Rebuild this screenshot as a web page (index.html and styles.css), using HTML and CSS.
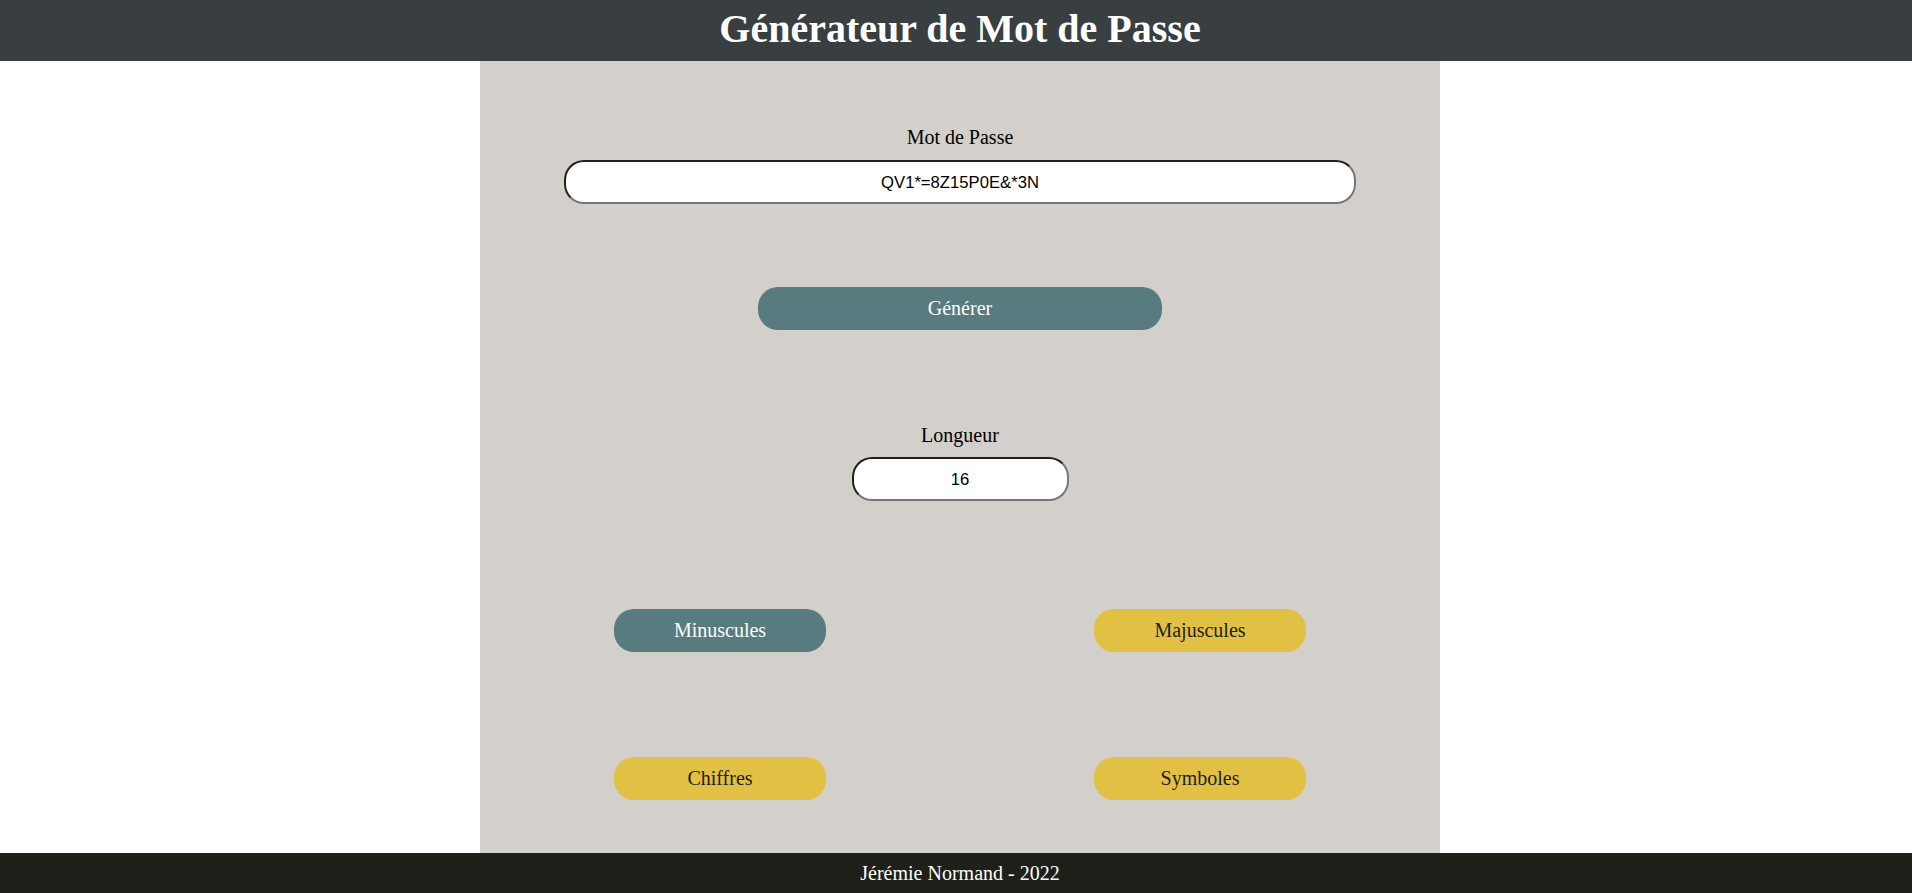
FILE: index.html
```html
<!DOCTYPE html>
<html lang="fr">
<head>
<meta charset="utf-8">
<title>Générateur de Mot de Passe</title>
<link rel="stylesheet" href="styles.css">
</head>
<body>
<header class="site-header">
  <h1 class="title">Générateur de Mot de Passe</h1>
</header>
<main class="panel">
  <section class="field field-password">
    <label class="field-label" for="password">Mot de Passe</label>
    <input class="field-input input-password" id="password" type="text" value="QV1*=8Z15P0E&amp;*3N" readonly>
  </section>
  <button class="btn btn-active btn-generate" type="button">Générer</button>
  <section class="field field-length">
    <label class="field-label" for="length">Longueur</label>
    <input class="field-input input-length" id="length" type="text" value="16">
  </section>
  <div class="options">
    <div class="option-cell"><button class="btn btn-active btn-option" type="button">Minuscules</button></div>
    <div class="option-cell"><button class="btn btn-inactive btn-option" type="button">Majuscules</button></div>
    <div class="option-cell"><button class="btn btn-inactive btn-option" type="button">Chiffres</button></div>
    <div class="option-cell"><button class="btn btn-inactive btn-option" type="button">Symboles</button></div>
  </div>
</main>
<footer class="site-footer">Jérémie Normand - 2022</footer>
</body>
</html>
```
FILE: styles.css
```css
html {
  overflow: hidden;
}

body {
  margin: 0;
  width: 1920px;
  font-family: "Liberation Serif", "Times New Roman", serif;
  font-size: 20px;
  color: #000;
  background: #ffffff;
}

.site-header {
  background: #393e41;
  padding: 6px 0 9px;
  text-align: center;
}

.title {
  margin: 0;
  font-size: 40px;
  line-height: 46px;
  font-weight: bold;
  color: #ffffff;
}

.panel {
  width: 960px;
  margin: 0 auto;
  background: #d3d0cb;
  padding: 65px 0 53px;
  display: flex;
  flex-direction: column;
  align-items: center;
}

.field {
  display: flex;
  flex-direction: column;
  align-items: center;
}

.field-label {
  display: block;
  line-height: 23px;
  margin-bottom: 11px;
}

.field-length {
  margin-top: 94px;
}

.field-length .field-label {
  margin-bottom: 10px;
}

.field-input {
  box-sizing: border-box;
  height: 44px;
  border-style: solid;
  border-width: 2px;
  border-color: #1e2019 #767676 #767676 #1e2019;
  border-radius: 20px;
  background: #ffffff;
  font-family: "Liberation Sans", Arial, sans-serif;
  font-size: 16.67px;
  color: #000;
  text-align: center;
  padding: 2px 10px 0;
  outline: none;
}

.input-password {
  width: 792px;
}

.input-length {
  width: 217px;
}

.btn {
  box-sizing: border-box;
  height: 43px;
  border: none;
  border-radius: 20px;
  font-family: "Liberation Serif", "Times New Roman", serif;
  font-size: 20px;
  line-height: 23px;
  padding: 0;
  cursor: pointer;
}

.btn-active {
  background: #587b7f;
  color: #ffffff;
}

.btn-inactive {
  background: #e2c044;
  color: #1e2019;
}

.btn-generate {
  width: 404px;
  margin-top: 83px;
}

.options {
  margin-top: 108px;
  width: 100%;
  display: grid;
  grid-template-columns: 1fr 1fr;
  row-gap: 105px;
  justify-items: center;
}

.btn-option {
  width: 212px;
}

.site-footer {
  background: #1e2019;
  color: #ffffff;
  height: 40px;
  line-height: 40px;
  text-align: center;
  font-size: 20px;
}
```
